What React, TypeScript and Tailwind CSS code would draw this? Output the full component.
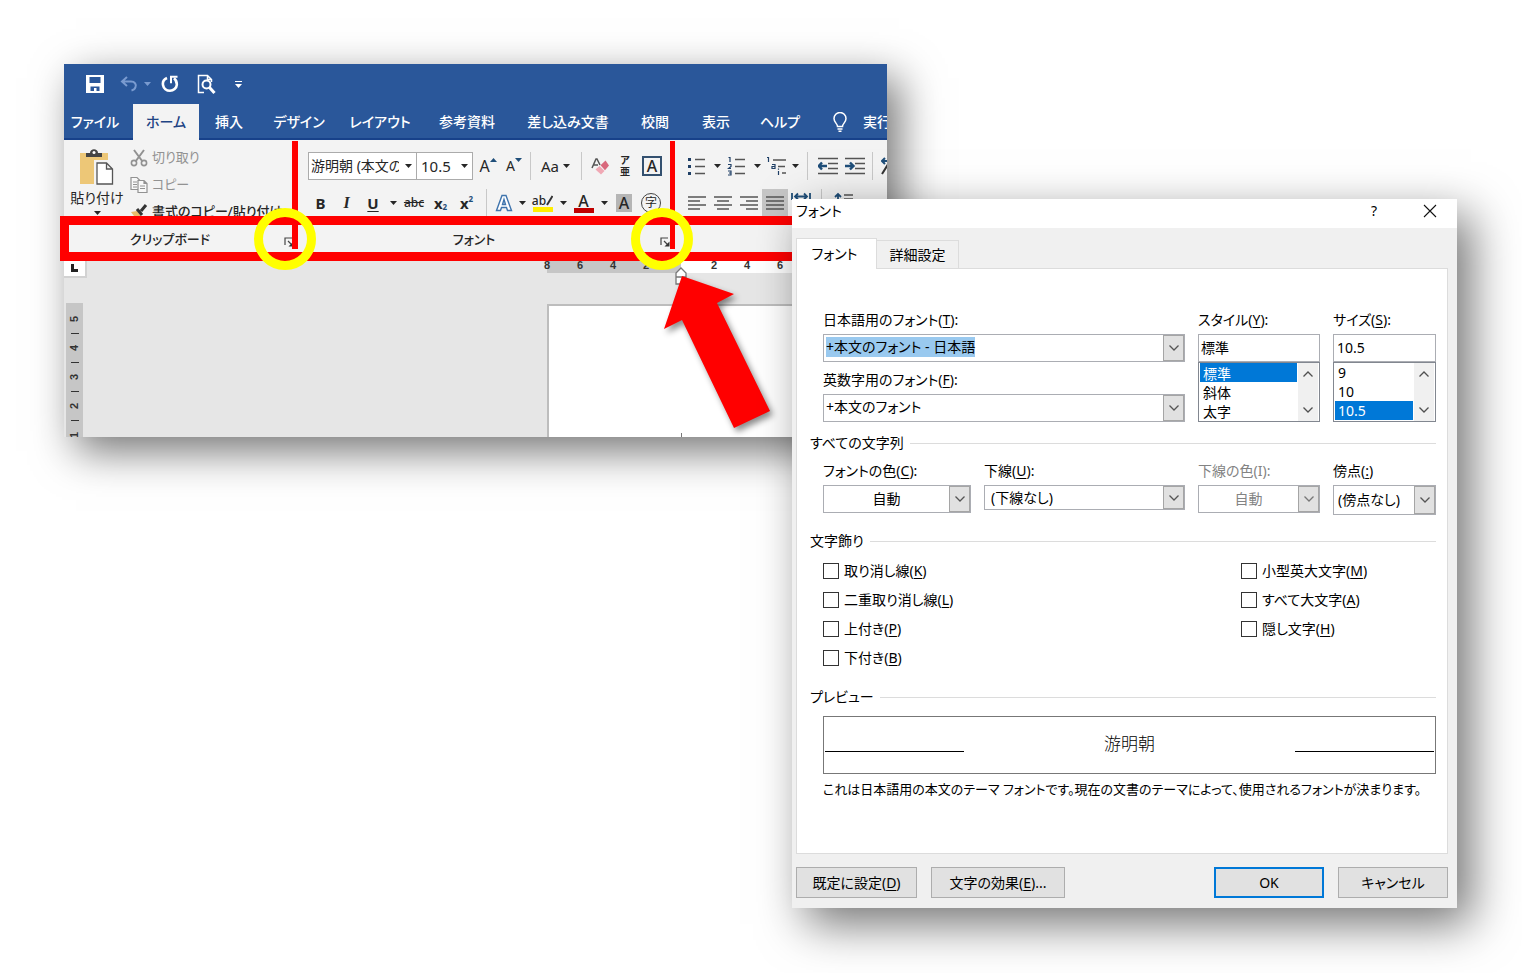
import { useEffect, useRef } from "react";
import type { ReactNode } from "react";

const UI =
  "font-['Noto_Sans','Noto_Sans_CJK_JP',sans-serif] [font-feature-settings:'palt']";

/* ---------- shared pieces ---------- */

function Caret({ className = "" }: { className?: string }) {
  return (
    <svg viewBox="0 0 7 4" className={`h-1 w-[7px] shrink-0 ${className}`} aria-hidden="true">
      <path d="M0 0h7L3.5 4z" fill="currentColor" />
    </svg>
  );
}

function Chevron({ up = false }: { up?: boolean }) {
  return (
    <svg viewBox="0 0 10 6" className="h-1.5 w-2.5" fill="none" stroke="currentColor" aria-hidden="true">
      <path d={up ? "M.5 5.5 5 1l4.5 4.5" : "M.5.5 5 5 9.500.5"} strokeWidth="1.3" />
    </svg>
  );
}

function ToolButton({ label, className, children }: { label: string; className: string; children: ReactNode }) {
  return (
    <button type="button" aria-label={label} className={`flex h-7 shrink-0 items-center justify-center ${className}`}>
      {children}
    </button>
  );
}

function Divider({ className }: { className: string }) {
  return (
    <span className={`flex shrink-0 justify-center ${className}`}>
      <span className="h-7 w-px bg-[#c8c8c8]" />
    </span>
  );
}

/* ---------- Word window ---------- */

function QuickAccess() {
  return (
    <div className="flex h-10 shrink-0 items-center pl-[22px] text-white">
      <button type="button" aria-label="上書き保存">
        <svg viewBox="0 0 18 18" className="size-[18px]" aria-hidden="true">
          <path d="M0 0h18v18H0z" fill="#fff" />
          <path d="M3.500 2h11v6h-11zM4.500 11.500h9V16h-3v-3H8v3H4.500z" fill="#2a579a" />
        </svg>
      </button>
      <button type="button" aria-label="元に戻す" className="ml-4 flex items-center gap-1.5 text-[#7a9bd0]">
        <svg viewBox="0 0 18 16" className="h-4 w-[18px]" fill="none" stroke="currentColor" strokeWidth="2" aria-hidden="true">
          <path d="M7 1 2 5.500l5 4.500M2.500 5.500H11c4 0 5.500 3 4.500 5.500-.5 2-2 3-4 3.500" />
        </svg>
        <Caret />
      </button>
      <button type="button" aria-label="やり直し" className="ml-2.5">
        <svg viewBox="0 0 18 18" className="size-[18px]" fill="none" stroke="#fff" strokeWidth="2.600" aria-hidden="true">
          <path d="M6 3C3 4.300 1.500 7 2 10c.6 3.500 3.500 5.800 7 5.800s6.500-2.600 6.800-6C16 7 15 5 13 3.300" />
          <path d="M16.500 1.800H10v6.400" strokeWidth="2" />
        </svg>
      </button>
      <button type="button" aria-label="印刷プレビュー" className="ml-[18px]">
        <svg viewBox="0 0 20 20" className="size-5" fill="none" stroke="#fff" aria-hidden="true">
          <path d="M7 18.500H1.500v-17h9l4 4V8M10.500 1.500v4h4" strokeWidth="1.500" />
          <circle cx="9.500" cy="10.500" r="4" strokeWidth="2" />
          <path d="m12.500 13.500 5 5.500" strokeWidth="3" />
        </svg>
      </button>
      <button type="button" aria-label="クイック アクセス ツール バーのカスタマイズ" className="ml-[18px] flex flex-col items-center gap-0.5">
        <span className="h-px w-[7px] bg-white" />
        <Caret />
      </button>
    </div>
  );
}

const TABS = [
  { name: "ファイル", width: "w-[62px]" },
  { name: "ホーム", width: "ml-[7px] w-[66px]", active: true },
  { name: "挿入", width: "w-[60px]" },
  { name: "デザイン", width: "w-20" },
  { name: "レイアウト", width: "w-[82px]" },
  { name: "参考資料", width: "w-[92px]" },
  { name: "差し込み文書", width: "w-[110px]" },
  { name: "校閲", width: "w-16" },
  { name: "表示", width: "w-[58px]" },
  { name: "ヘルプ", width: "w-[70px]" },
];

function RibbonTabs() {
  return (
    <nav className="flex h-9 shrink-0 bg-[linear-gradient(to_top,#17418a_2px,#2a579a_2px)] text-sm font-medium whitespace-nowrap text-white">
      {TABS.map((t) => (
        <button
          key={t.name}
          type="button"
          className={`flex shrink-0 items-center justify-center ${t.width} ${t.active ? "bg-[#f3f3f3] text-[#1f4484]" : ""}`}
        >
          {t.name}
        </button>
      ))}
      <button type="button" className="flex shrink-0 items-center gap-4 pl-[18px]">
        <svg viewBox="0 0 14 20" className="h-5 w-3.5 shrink-0" fill="none" stroke="#fff" strokeWidth="1.500" aria-hidden="true">
          <path d="M4.500 14.500c0-3-3.500-4-3.500-8a6 6 0 0 1 12 0c0 4-3.500 5-3.500 8zM4.500 17h5M5.500 19.200h3" />
        </svg>
        実行
      </button>
    </nav>
  );
}

function Launcher() {
  return (
    <svg viewBox="0 0 10 10" className="size-2.5" fill="none" stroke="#444" strokeWidth="1.200" aria-hidden="true">
      <path d="M1 8V1h7M4 4l4 4" />
      <path d="M9.500 4.500v5h-5z" fill="#333" stroke="none" />
    </svg>
  );
}

function Group({ title, width, padding, launcher, children }: { title?: string; width: string; padding: string; launcher?: string; children: ReactNode }) {
  return (
    <section className={`flex h-[115px] shrink-0 flex-col ${width}`}>
      <div className={`h-[85px] shrink-0 ${padding}`}>{children}</div>
      {title && (
        <div className="flex h-[30px] items-center text-[13px] font-medium">
          <h2 className="flex-1 pr-2 text-center">{title}</h2>
          <button type="button" aria-label={`${title}の詳細`} className={`pt-1 ${launcher}`}>
            <Launcher />
          </button>
        </div>
      )}
    </section>
  );
}

function ClipboardGroup() {
  return (
    <Group title="クリップボード" width="w-[232px]" padding="pl-2" launcher="mr-0.5">
      <div className="flex gap-2 pt-2 text-[13px] whitespace-nowrap">
        <button type="button" className="flex w-[50px] flex-col items-center text-sm leading-[19px]">
          <svg viewBox="0 0 36 38" className="h-[38px] w-9" aria-hidden="true">
            <path d="M1 5h28v31H1z" fill="#edc777" />
            <path d="M7 9V5h4c0-5 8-5 8 0h4v4z" fill="#444" />
            <circle cx="15" cy="4.500" r="1.500" fill="#fff" />
            <path d="M15 12h19v25H15z" fill="#f3f3f3" />
            <path d="M18 15h9.500l6 6v15H18zM27.500 15v6h6" fill="#fff" stroke="#555" strokeWidth="1.300" />
          </svg>
          <span className="mt-0.5">貼り付け</span>
          <Caret className="mt-1" />
        </button>
        <div className="flex flex-col">
          <button type="button" className="flex h-[27px] items-center gap-1 pb-2 text-[#929292]">
            <svg viewBox="0 0 18 18" className="size-[18px]" fill="none" stroke="currentColor" strokeWidth="1.600" aria-hidden="true">
              <path d="m4 1 8.500 11.500M14 1 5.500 12.500" strokeWidth="2" />
              <circle cx="4" cy="14" r="2.600" />
              <circle cx="14" cy="14" r="2.600" />
            </svg>
            切り取り
          </button>
          <button type="button" className="flex h-[27px] items-center gap-1 pb-2 text-[#929292]">
            <svg viewBox="0 0 18 18" className="size-[18px]" fill="#f8f8f8" stroke="currentColor" strokeWidth="1.200" aria-hidden="true">
              <path d="M1 1.500h6l3 3v9H1zM3 6h4M3 8.500h4M3 11h4" />
              <path d="M8 4.500h6l3 3v9H8zM14 4.500v3h3M10 10h5M10 12.500h5" />
            </svg>
            コピー
          </button>
          <button type="button" className="flex h-[27px] items-center gap-1 pb-2 font-medium">
            <svg viewBox="0 0 18 18" className="size-[18px]" aria-hidden="true">
              <path d="m1 9 6-1 4 5-4 4z" fill="#e8bd6c" />
              <path d="m7 6 5 6M11 8l5-6" stroke="#333" strokeWidth="3" fill="none" />
            </svg>
            書式のコピー/貼り付け
          </button>
        </div>
      </div>
    </Group>
  );
}

function FontGroup() {
  return (
    <Group title="フォント" width="w-[378px]" padding="pl-3" launcher="mr-1">
      <div className="flex items-center pt-3">
        <div className="flex h-7 w-[165px] shrink-0 border border-[#ababab] bg-white text-[15px]">
          <label className="flex w-[108px] items-center border-r border-[#ababab] pr-1 pl-0.5">
            <input aria-label="フォント名" defaultValue="游明朝 (本文のフォント)" className="w-[88px] text-sm outline-none" />
            <Caret className="ml-auto" />
          </label>
          <label className="flex flex-1 items-center pr-1 pl-1">
            <input aria-label="フォント サイズ" defaultValue="10.5" className="w-9 outline-none" />
            <Caret className="ml-auto" />
          </label>
        </div>
        <ToolButton label="フォントの拡大" className="ml-px w-7 text-base">
          A<Caret className="mb-3 rotate-180 text-[#1f4e79]" />
        </ToolButton>
        <ToolButton label="フォントの縮小" className="w-6 text-sm">
          A<Caret className="mb-3 text-[#1f4e79]" />
        </ToolButton>
        <Divider className="w-2" />
        <ToolButton label="文字種の変換" className="w-[43px] gap-1 text-[15px]">
          Aa
          <Caret />
        </ToolButton>
        <Divider className="w-2" />
        <ToolButton label="書式のクリア" className="w-[29px]">
          <svg viewBox="0 0 18 18" className="size-[18px]" aria-hidden="true">
            <path d="m1 11 4-9h1l3 6M2.500 8H7" fill="none" stroke="#555" strokeWidth="1.500" />
            <path d="m4.500 12.500 4-3.500 5 5-3.500 3.500z" fill="#f0a8b4" />
            <path d="m9.500 8.200 5-4.700 3.500 5-4 4.700z" fill="#d9687c" />
          </svg>
        </ToolButton>
        <ToolButton label="ルビ" className="w-[22px] flex-col text-[10px] leading-[11px] font-bold">
          <span className="h-[11px]">ア</span>
          <span className="h-[11px]">亜</span>
        </ToolButton>
        <ToolButton label="囲み線" className="w-8">
          <span className="flex size-5 items-center justify-center border-2 border-[#33506f] text-base leading-4 font-medium">A</span>
        </ToolButton>
      </div>
      <div className="flex items-center pt-[9px]">
        <ToolButton label="太字" className="w-[25px] text-[15px] font-bold">B</ToolButton>
        <ToolButton label="斜体" className="w-[27px] font-['Liberation_Serif',serif] text-base font-bold italic">I</ToolButton>
        <ToolButton label="下線" className="w-[26px] text-[15px] font-bold underline underline-offset-2">U</ToolButton>
        <ToolButton label="下線の種類" className="w-3.5"><Caret /></ToolButton>
        <ToolButton label="取り消し線" className="w-7 text-xs font-medium line-through">abc</ToolButton>
        <ToolButton label="下付き" className="w-[25px] text-[15px] font-bold">
          x<span className="mt-2 text-[8px] text-[#1f4e79]">2</span>
        </ToolButton>
        <ToolButton label="上付き" className="w-[27px] text-[15px] font-bold">
          x<span className="mb-2 text-[8px] text-[#1f4e79]">2</span>
        </ToolButton>
        <Divider className="w-3" />
        <ToolButton label="文字の効果" className="w-6">
          <svg viewBox="0 0 18 18" className="size-[18px]" fill="#fff" stroke="#3f74ad" strokeWidth="1.400" aria-hidden="true">
            <path d="M1.500 16.500 7 1.500h4l5.500 15h-4l-1-3h-5l-1 3zM7.500 10.500h3L9 5.500z" />
          </svg>
        </ToolButton>
        <ToolButton label="文字の効果の一覧" className="w-3"><Caret /></ToolButton>
        <ToolButton label="蛍光ペンの色" className="w-[29px] flex-col">
          <span className="flex items-start text-xs leading-[12px] font-medium">
            ab
            <svg viewBox="0 0 7 12" className="h-3 w-[7px]" aria-hidden="true">
              <path d="M6.500 1 1 10" stroke="#333" strokeWidth="2" />
            </svg>
          </span>
          <span className="h-[5px] w-5 bg-[#ffee00]" />
        </ToolButton>
        <ToolButton label="蛍光ペンの色の一覧" className="w-3"><Caret /></ToolButton>
        <ToolButton label="フォントの色" className="w-[29px] flex-col text-base leading-[14px] font-medium">
          A
          <span className="h-[5px] w-5 bg-[#c00000]" />
        </ToolButton>
        <ToolButton label="フォントの色の一覧" className="w-3"><Caret /></ToolButton>
        <ToolButton label="文字の網かけ" className="w-7">
          <span className="flex h-[18px] w-4 items-center justify-center bg-[#b5b5b5] text-base leading-4 font-medium">A</span>
        </ToolButton>
        <ToolButton label="囲い文字" className="w-[26px]">
          <span className="flex size-5 items-center justify-center rounded-full border border-[#444] text-xs leading-3">字</span>
        </ToolButton>
      </div>
    </Group>
  );
}

function Lines({ d }: { d: string }) {
  return (
    <svg viewBox="0 0 18 14" className="h-3.5 w-[18px]" fill="none" stroke="#555" strokeWidth="1.500" aria-hidden="true">
      <path d={d} />
    </svg>
  );
}

function ListIcon({ kind }: { kind: "bullet" | "number" | "multi" }) {
  return (
    <svg viewBox="0 0 20 20" className="size-5 shrink-0" aria-hidden="true">
      {kind === "multi" ? (
        <path d="M7 4h13M12 10.500h7M16 17h4" stroke="#555" strokeWidth="1.500" />
      ) : (
        <path d="M8 3.500h10M8 10.500h10M8 17.500h10" stroke="#555" strokeWidth="1.500" />
      )}
      {kind === "bullet" && <path d="M1 2h3v3H1zM1 9h3v3H1zM1 16h3v3H1z" fill="#1f3f66" />}
      {kind === "number" && <path d="M1.500 1.500h1.500V6M1 8.500h3v2L1.500 12.500H4M1 15h3v4H1M2 17h2" fill="none" stroke="#1f3f66" strokeWidth="1.200" />}
      {kind === "multi" && <path d="M1 1.500h1.500V6M6 8.500h3v4H6v-2h3M12.500 15v4M12.500 12.500v1.200" fill="none" stroke="#1f3f66" strokeWidth="1.200" />}
    </svg>
  );
}

function IndentIcon({ inward = false }: { inward?: boolean }) {
  return (
    <svg viewBox="0 0 20 18" className="h-[18px] w-5" fill="none" aria-hidden="true">
      <path d="M0 1.500h20M10 6.500h10M10 11.500h10M0 16.500h20" stroke="#555" strokeWidth="1.500" />
      <path d={inward ? "M0 9h8M5 5.500 8.500 9 5 12.500" : "M9 9H1M4 5.500.8 9 4 12.500"} stroke="#1f4e79" strokeWidth="2.400" />
    </svg>
  );
}

function ParagraphGroup() {
  return (
    <Group width="w-[213px]" padding="pl-[7px]">
      <div className="flex items-center pt-3">
        <ToolButton label="箇条書き" className="w-8"><ListIcon kind="bullet" /></ToolButton>
        <ToolButton label="行頭文字" className="w-2"><Caret /></ToolButton>
        <ToolButton label="段落番号" className="w-8"><ListIcon kind="number" /></ToolButton>
        <ToolButton label="番号の種類" className="w-2"><Caret /></ToolButton>
        <ToolButton label="アウトライン" className="w-[30px]"><ListIcon kind="multi" /></ToolButton>
        <ToolButton label="アウトラインの種類" className="w-[9px]"><Caret /></ToolButton>
        <Divider className="w-3.5" />
        <ToolButton label="インデントを減らす" className="w-7"><IndentIcon /></ToolButton>
        <ToolButton label="インデントを増やす" className="w-[25px]"><IndentIcon inward /></ToolButton>
        <Divider className="w-2.5" />
        <ToolButton label="拡張書式" className="w-7">
          <svg viewBox="0 0 20 18" className="h-[18px] w-5" fill="none" aria-hidden="true">
            <path d="M1 4h14M4 1 1 4l3 3" stroke="#1f4e79" strokeWidth="2" />
            <path d="m1 17 5-8 5 8" stroke="#333" strokeWidth="2" />
          </svg>
        </ToolButton>
      </div>
      <div className="flex items-center pt-[9px] pl-[3px]">
        <ToolButton label="左揃え" className="w-[26px]"><Lines d="M0 1h18M0 5h12M0 9h18M0 13h12" /></ToolButton>
        <ToolButton label="中央揃え" className="w-[26px]"><Lines d="M0 1h18M3 5h12M0 9h18M3 13h12" /></ToolButton>
        <ToolButton label="右揃え" className="w-[26px]"><Lines d="M0 1h18M6 5h12M0 9h18M6 13h12" /></ToolButton>
        <ToolButton label="両端揃え" className="w-[26px] bg-[#c6c6c6]"><Lines d="M0 1h18M0 5h18M0 9h18M0 13h18" /></ToolButton>
        <ToolButton label="均等割り付け" className="w-[26px] pb-3">
          <svg viewBox="0 0 20 18" className="h-[18px] w-5" fill="none" aria-hidden="true">
            <path d="M1 5v7M19 5v7M4 8.500h12M7 5.500l-3 3 3 3M13 5.500l3 3-3 3" stroke="#1f4e79" strokeWidth="1.800" />
          </svg>
        </ToolButton>
        <Divider className="w-3.5" />
        <ToolButton label="行間" className="w-8 pb-2">
          <svg viewBox="0 0 20 18" className="h-[18px] w-5" fill="none" aria-hidden="true">
            <path d="M4 18V4M1 7l3-3 3 3" stroke="#1f4e79" strokeWidth="1.800" />
            <path d="M10 5h9M10 9h9" stroke="#555" strokeWidth="1.500" />
          </svg>
        </ToolButton>
      </div>
    </Group>
  );
}

const RULER = "flex-none w-[33px] leading-[20px]";

function DocumentArea() {
  return (
    <div className="flex flex-1 bg-[#e6e6e6] font-['Liberation_Sans',sans-serif] text-[11px] font-bold text-[#333]">
      <div className="w-6 shrink-0">
        <div className="flex h-[23px] w-[23px] items-end justify-center border-r-2 border-b-2 border-[#d2d2d2] bg-white pb-1">
          <span className="h-2 w-[7px] border-b-[3px] border-l-[3px] border-[#222]" />
        </div>
        <ol aria-label="垂直ルーラー" className="mt-[25px] ml-0.5 flex w-[17px] flex-col items-center bg-[#c6c6c6] pt-[9px]">
          {[5, 4, 3, 2, 1].map((n) => (
            <li key={n} className="flex flex-col items-center">
              <span className="h-3.5 -rotate-90 leading-[14px]">{n}</span>
              <span className="flex h-[15px] items-center">
                <span className="h-px w-2 bg-[#333]" />
              </span>
            </li>
          ))}
        </ol>
      </div>
      <div className="ml-[459px] min-w-0 flex-1">
        <div className="relative flex h-[18px] w-[340px]">
          <div className="flex w-[134px] shrink-0 bg-[#c6c6c6]">
            {[8, 6, 4, 2].map((n) => (
              <span key={n} className={RULER}>
                <span className="inline-block -translate-x-1/2">{n}</span>
              </span>
            ))}
          </div>
          <div className="flex flex-1 bg-white">
            <span className={RULER} />
            {[2, 4, 6].map((n) => (
              <span key={n} className={RULER}>
                <span className="inline-block -translate-x-1/2">{n}</span>
              </span>
            ))}
          </div>
          <svg viewBox="0 0 12 18" className="absolute top-3 left-32 h-[18px] w-3" fill="#fff" stroke="#777" strokeWidth="1.300" aria-hidden="true">
            <path d="M1 17V6l5-5 5 5v11zM1 10h10" />
          </svg>
        </div>
        <div className="mt-[31px] flex h-[133px] items-end border-t-2 border-l-2 border-[#bdbdbd] bg-white pl-[132px]">
          <span className="h-1 w-px bg-[#777]" />
        </div>
      </div>
    </div>
  );
}

function Annotations() {
  return (
    <div className="pointer-events-none absolute inset-0" aria-hidden="true">
      <div className="absolute top-[152px] -left-1 h-[45px] w-[827px] border-[9px] border-[#ff0000]" />
      <div className="absolute top-[77px] left-[228px] h-[108px] w-1.5 bg-[#ff0000]" />
      <div className="absolute top-[77px] left-[606px] h-[108px] w-[5px] bg-[#ff0000]" />
      <div className="absolute top-36 left-[190px] size-[62px] rounded-full border-[9px] border-[#ffff00]" />
      <div className="absolute top-36 left-[567px] size-[62px] rounded-full border-[9px] border-[#ffff00]" />
      <svg viewBox="0 0 107 153" className="absolute top-[212px] left-[600px] h-[153px] w-[107px] overflow-visible drop-shadow-[3px_4px_3px_rgba(0,0,0,0.45)]">
        <path d="M18 0 70 18 53 27 106 135 70 152 18 44 0 53z" fill="#ff0000" />
      </svg>
    </div>
  );
}

function WordWindow() {
  return (
    <div className="relative w-[823px]">
      <section aria-label="Word" className="flex h-[373px] flex-col overflow-hidden bg-[#2a579a] text-[#262626] shadow-[12px_14px_40px_rgba(0,0,0,0.55)]">
        <QuickAccess />
        <RibbonTabs />
        <div className="flex shrink-0 overflow-hidden bg-[#f3f3f3]">
          <ClipboardGroup />
          <FontGroup />
          <ParagraphGroup />
        </div>
        <DocumentArea />
      </section>
      <Annotations />
    </div>
  );
}

/* ---------- Font dialog ---------- */

function Key({ text, k }: { text: string; k: string }) {
  const [before, after] = text.split("*");
  return (
    <span>
      {before}
      <span className="underline underline-offset-2">{k}</span>
      {after}
    </span>
  );
}

const BOX = "border border-[#abadb3] bg-white";

function DropArrow({ muted = false }: { muted?: boolean }) {
  return (
    <span className={`pointer-events-none flex w-[21px] shrink-0 items-center justify-center border border-[#a5a5a5] bg-[#e1e1e1] ${muted ? "text-[#777]" : "text-[#555]"}`}>
      <Chevron />
    </span>
  );
}

function DropDown({ id, value, height, align = "pl-1.5", disabled = false }: { id: string; value: string; height: string; align?: string; disabled?: boolean }) {
  return (
    <div className={`flex ${BOX} ${height}`}>
      <select id={id} disabled={disabled} defaultValue={value} className={`min-w-0 flex-1 appearance-none opacity-100 outline-none disabled:text-[#838383] ${align}`}>
        <option>{value}</option>
      </select>
      <DropArrow muted={disabled} />
    </div>
  );
}

function ListBox({ label, options, selected }: { label: string; options: string[]; selected: string }) {
  return (
    <div className="flex h-[60px] border border-[#828790] bg-white px-px">
      <select
        aria-label={label}
        size={3}
        defaultValue={selected}
        className="min-w-0 flex-1 appearance-none overflow-hidden outline-none [&>option]:h-[19px] [&>option]:min-h-0 [&>option]:px-[3px] [&>option]:py-0 [&>option]:leading-[18px] [&>option:checked]:bg-[linear-gradient(#0078d7,#0078d7)] [&>option:checked]:text-white"
      >
        {options.map((o) => (
          <option key={o}>{o}</option>
        ))}
      </select>
      <div className="ml-px flex w-5 flex-col items-center justify-between bg-[#f0f0f0] py-2 text-[#505050]">
        <Chevron up />
        <Chevron />
      </div>
    </div>
  );
}

function SectionTitle({ children }: { children: ReactNode }) {
  return (
    <h3 className="flex h-5 items-center gap-1.5 pl-[13px]">
      {children}
      <span className="h-px flex-1 bg-[#dcdcdc]" />
    </h3>
  );
}

function Check({ text, k }: { text: string; k: string }) {
  return (
    <label className="flex h-[18px] items-center gap-[5px]">
      <input type="checkbox" className="size-4 shrink-0 appearance-none border border-[#333] bg-white" />
      <Key text={text} k={k} />
    </label>
  );
}

function FontDialog() {
  const japanese = useRef<HTMLInputElement>(null);
  useEffect(() => {
    japanese.current?.focus({ preventScroll: true });
    japanese.current?.select();
  }, []);

  return (
    <section role="dialog" aria-label="フォント" className="absolute top-[199px] left-[792px] w-[665px] bg-[#f0f0f0] text-sm leading-5 whitespace-nowrap text-black shadow-[14px_16px_44px_rgba(0,0,0,0.55)]">
      <header className="flex h-[29px] items-center bg-white pr-5 pb-1.5 pl-1">
        <h1 className="flex-1">フォント</h1>
        <button type="button" aria-label="ヘルプ" className="w-4">?</button>
        <button type="button" aria-label="閉じる" className="ml-[41px]">
          <svg viewBox="0 0 14 14" className="size-3.5" stroke="#111" strokeWidth="1.100" aria-hidden="true">
            <path d="m1 1 12 12M13 1 1 13" />
          </svg>
        </button>
      </header>

      <div className="pt-[10px] pr-[9px] pl-1">
        <div role="tablist" className="flex items-end">
          <button type="button" role="tab" aria-selected="true" className="relative -mb-px h-[31px] w-[81px] border border-b-0 border-[#dcdcdc] bg-white pr-1">
            フォント
          </button>
          <button type="button" role="tab" aria-selected="false" className="h-7 w-[82px] border border-b-0 border-l-0 border-[#dcdcdc]">
            詳細設定
          </button>
        </div>

        <div role="tabpanel" className="h-[586px] border border-[#dcdcdc] bg-white pt-[41px] pr-[11px]">
          <div className="grid grid-cols-[1fr_122px_103px] gap-x-[13px] pl-[26px]">
            <div>
              <label htmlFor="ja-font" className="block h-6"><Key text="日本語用のフォント(*):" k="T" /></label>
              <div className={`flex h-7 ${BOX}`}>
                <input id="ja-font" ref={japanese} defaultValue="+本文のフォント - 日本語" className="min-w-0 flex-1 pb-0.5 pl-0.5 outline-none selection:bg-[#99c9ef] selection:text-black" />
                <DropArrow />
              </div>
              <label htmlFor="latin-font" className="mt-2 block h-6"><Key text="英数字用のフォント(*):" k="F" /></label>
              <DropDown id="latin-font" value="+本文のフォント" height="h-7" align="pb-0.5 pl-0.5" />
            </div>
            <div>
              <label htmlFor="style" className="block h-6"><Key text="スタイル(*):" k="Y" /></label>
              <input id="style" defaultValue="標準" className={`block h-7 w-full pb-0.5 pl-0.5 outline-none ${BOX}`} />
              <ListBox label="スタイル一覧" options={["標準", "斜体", "太字"]} selected="標準" />
            </div>
            <div>
              <label htmlFor="size" className="block h-6"><Key text="サイズ(*):" k="S" /></label>
              <input id="size" defaultValue="10.5" className={`block h-7 w-full pb-0.5 pl-[3px] outline-none ${BOX}`} />
              <ListBox label="サイズ一覧" options={["9", "10", "10.5"]} selected="10.5" />
            </div>
          </div>

          <div className="mt-[11px]">
            <SectionTitle>すべての文字列</SectionTitle>
          </div>
          <div className="mt-2 grid grid-cols-[148px_1fr_122px_103px] gap-x-[13px] pl-[26px]">
            <div>
              <label htmlFor="color" className="block h-6"><Key text="フォントの色(*):" k="C" /></label>
              <DropDown id="color" value="自動" height="h-7" align="text-center" />
            </div>
            <div>
              <label htmlFor="underline" className="block h-6"><Key text="下線(*):" k="U" /></label>
              <DropDown id="underline" value="(下線なし)" height="h-[25px]" />
            </div>
            <div className="text-[#838383]">
              <label htmlFor="underline-color" className="block h-6">下線の色(I):</label>
              <DropDown id="underline-color" value="自動" height="h-7" align="text-center" disabled />
            </div>
            <div>
              <label htmlFor="emphasis" className="block h-6"><Key text="傍点(*)" k=":" /></label>
              <DropDown id="emphasis" value="(傍点なし)" height="h-[30px]" align="pl-1" />
            </div>
          </div>

          <div className="mt-4">
            <SectionTitle>文字飾り</SectionTitle>
          </div>
          <div className="mt-[11px] grid grid-cols-[1fr_195px] pl-[26px]">
            <div className="flex flex-col gap-[11px]">
              <Check text="取り消し線(*)" k="K" />
              <Check text="二重取り消し線(*)" k="L" />
              <Check text="上付き(*)" k="P" />
              <Check text="下付き(*)" k="B" />
            </div>
            <div className="flex flex-col gap-[11px]">
              <Check text="小型英大文字(*)" k="M" />
              <Check text="すべて大文字(*)" k="A" />
              <Check text="隠し文字(*)" k="H" />
            </div>
          </div>

          <div className="mt-5">
            <SectionTitle>プレビュー</SectionTitle>
          </div>
          <div className="mt-[9px] ml-[26px] flex h-[58px] items-center justify-between border border-[#777] px-px">
            <span className="mt-3 h-px w-[139px] bg-black" />
            <span className="font-['Liberation_Serif','Noto_Sans_CJK_JP',serif] text-[17px] font-light">游明朝</span>
            <span className="mt-3 h-px w-[139px] bg-black" />
          </div>
          <p className="mt-[5px] ml-[26px] text-[13px] leading-5">
            これは日本語用の本文のテーマ フォントです。現在の文書のテーマによって、使用されるフォントが決まります。
          </p>
        </div>

        <footer className="flex h-[54px] items-start pt-[13px]">
          <button type="button" className="h-[31px] w-[121px] border border-[#adadad] bg-[#e1e1e1]"><Key text="既定に設定(*)" k="D" /></button>
          <button type="button" className="ml-3.5 h-[31px] w-[134px] border border-[#adadad] bg-[#e1e1e1]"><Key text="文字の効果(*)..." k="E" /></button>
          <button type="button" className="ml-auto h-[31px] w-[110px] border-2 border-[#0078d7] bg-[#e1e1e1]">OK</button>
          <button type="button" className="ml-3.5 h-[31px] w-[110px] border border-[#adadad] bg-[#e1e1e1]">キャンセル</button>
        </footer>
      </div>
    </section>
  );
}

export default function App() {
  return (
    <main lang="ja" className={`relative min-h-screen overflow-hidden bg-white p-16 ${UI}`}>
      <WordWindow />
      <FontDialog />
    </main>
  );
}
